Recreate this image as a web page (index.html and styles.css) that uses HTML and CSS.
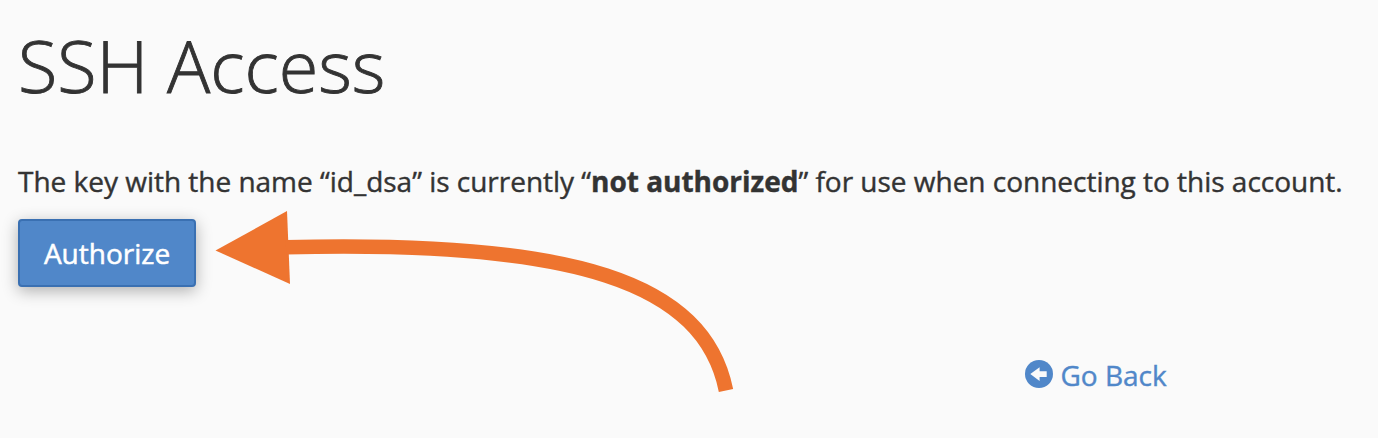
FILE: index.html
```html
<!DOCTYPE html>
<html lang="en">
<head>
<meta charset="utf-8">
<title>SSH Access</title>
<link rel="stylesheet" href="styles.css">
</head>
<body>
<main class="page">
  <h1 class="title">SSH Access</h1>
  <p class="message">The key with the name “id_dsa” is currently “<strong>not authorized</strong>” for use when connecting to this account.</p>
  <button class="authorize" type="button">Authorize</button>
  <a class="back" href="#">
    <svg class="back-icon" viewBox="0 0 28 28" aria-hidden="true"><circle cx="14" cy="14" r="14"/><path d="M5.3 14 14.6 7.2V11.3H21.7V17H14.6V21Z"/></svg>
    <span>Go Back</span>
  </a>
  <svg class="arrow" viewBox="210 210 530 190" aria-hidden="true"><path class="arrow-head" d="M215.5 250.5 287 211 290 284Z"/><path class="arrow-tail" d="M286 247.2C575 240 704 282 726 390.500"/></svg>
</main>
</body>
</html>
```
FILE: styles.css
```css
body { margin: 0; background: #fafafa; color: #333; font-family: "Open Sans", sans-serif; }
.page { position: relative; box-sizing: border-box; width: 1378px; height: 438px; padding: 16px 18px 0; overflow: hidden; display: flex; flex-direction: column; align-items: flex-start; }
.title { margin: 0; font-size: 72px; line-height: 98px; font-weight: 300; white-space: nowrap; -webkit-text-stroke: 0.9px; }
.message { margin: 47px 0 0; font-size: 28px; line-height: 40px; letter-spacing: -0.015px; white-space: nowrap; -webkit-text-stroke: 0.4px; }
.authorize { box-sizing: border-box; width: 178px; height: 68px; margin: 18px 0 0; padding: 0; border: 2px solid #3a70b2; border-radius: 4px; background: #5087c9; color: #fff; font: 28px/40px "Open Sans", sans-serif; box-shadow: 0 4px 16px rgba(0,0,0,.3); -webkit-text-stroke: 0.5px; }
.back { display: flex; align-items: flex-start; gap: 7.5px; margin: 68px 0 0 1007px; color: #5087c9; font-size: 28px; line-height: 40px; text-decoration: none; white-space: nowrap; -webkit-text-stroke: 0.4px; }
.back-icon { width: 28px; height: 28px; margin-top: 5px; fill: #5087c9; }
.back-icon path { fill: #fafafa; }
.arrow { position: absolute; left: 210px; top: 210px; width: 530px; height: 190px; }
.arrow-head { fill: #ee742f; }
.arrow-tail { fill: none; stroke: #ee742f; stroke-width: 14.6px; }
```
